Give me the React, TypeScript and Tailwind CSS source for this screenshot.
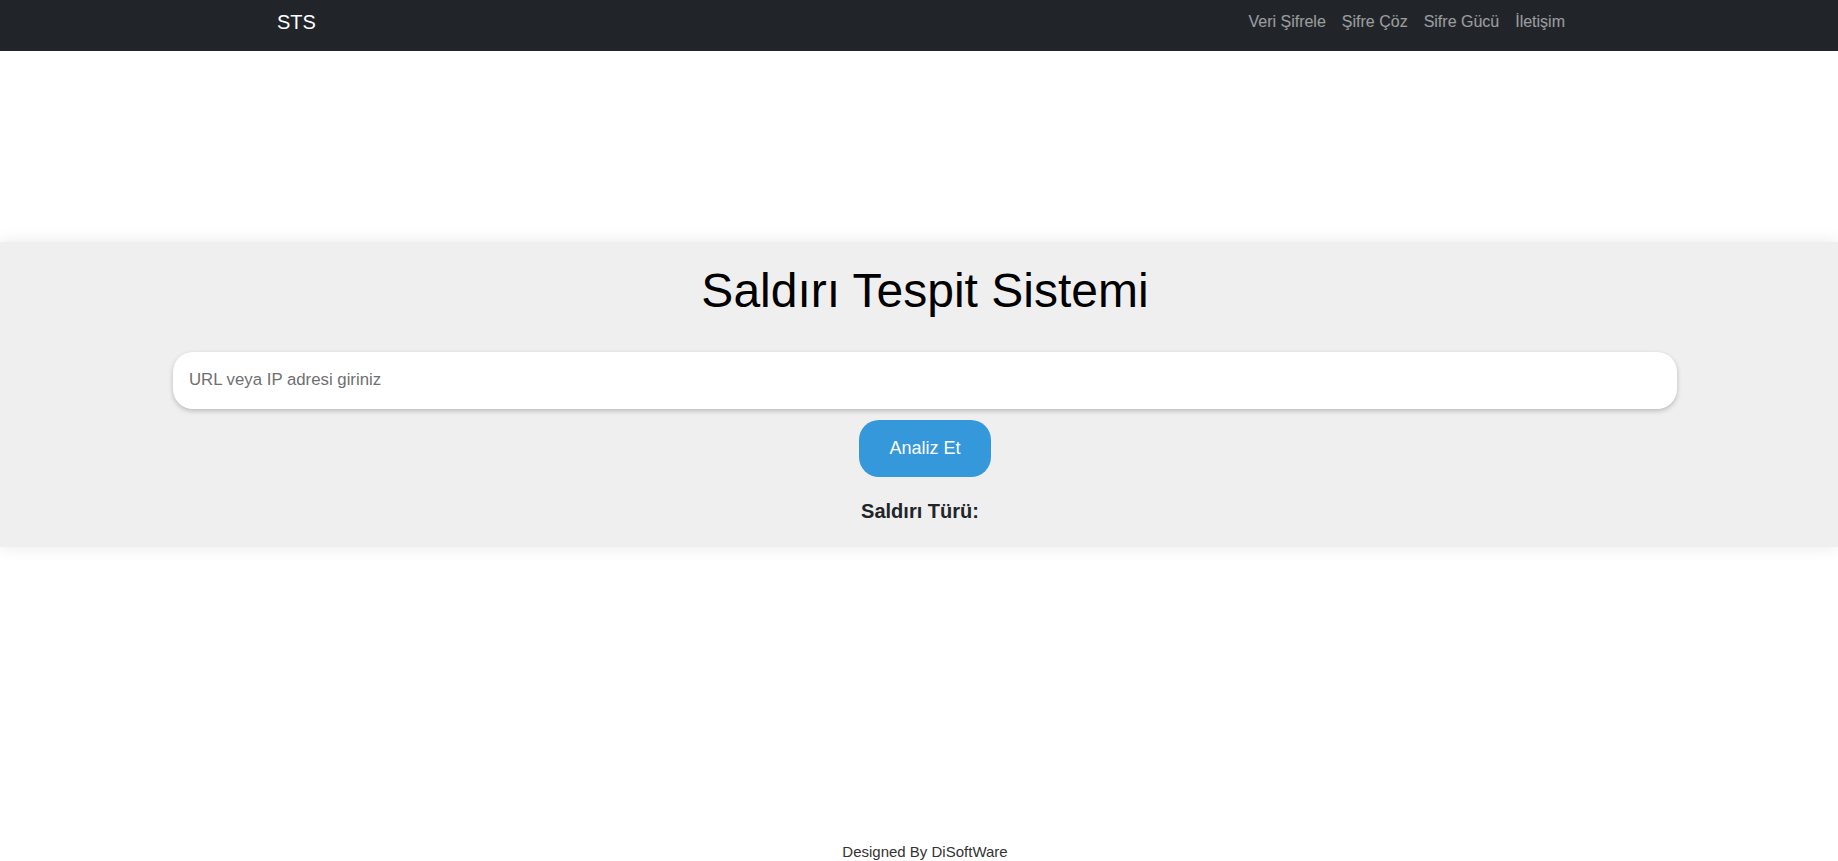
import { useState } from "react";

const links = ["Veri Şifrele", "Şifre Çöz", "Sifre Gücü", "İletişim"];

export default function App() {
  const [target, setTarget] = useState("");

  return (
    <div className="min-h-screen flex flex-col bg-white font-['Liberation_Sans',Arial,sans-serif]">
      <nav className="h-[51px] bg-[#212529]">
        <div className="h-[44px] flex items-center justify-between pl-[277px] pr-[265px]">
          <a href="#" className="text-[20px] leading-[30px] text-white">
            STS
          </a>
          <ul className="flex items-center">
            {links.map((label) => (
              <li key={label}>
                <a href="#" className="block px-2 text-[16px] leading-6 text-white/55">
                  {label}
                </a>
              </li>
            ))}
          </ul>
        </div>
      </nav>

      <main className="flex-1">
        <section className="mt-[191px] bg-[#efefef] shadow-[0_0_16px_rgba(0,0,0,0.09)] pl-[12px] pt-[20px] pb-[24px] flex flex-col items-center">
          <h1 className="text-[48px] leading-[1.2] text-black">Saldırı Tespit Sistemi</h1>
          <input
            value={target}
            onChange={(e) => setTarget(e.target.value)}
            placeholder="URL veya IP adresi giriniz"
            className="mt-[32px] w-[calc(100%-322px)] h-[57px] rounded-[20px] bg-white px-[16px] text-[16.8px] text-[#212529] placeholder:text-[#6f6f6f] shadow-[0_2px_5px_rgba(0,0,0,0.22)] outline-none"
          />
          <button className="mt-[11px] w-[132px] h-[57px] rounded-[20px] bg-[#3498db] text-[18px] text-white">
            Analiz Et
          </button>
          <h5 className="mt-[22px] mr-[10px] text-[20px] leading-[24px] font-bold text-[#212529]">Saldırı Türü:</h5>
        </section>
      </main>

      <footer className="h-[18px] pl-[12px] text-center text-[15px] leading-[18px] text-[#333]">
        Designed By DiSoftWare
      </footer>
    </div>
  );
}
